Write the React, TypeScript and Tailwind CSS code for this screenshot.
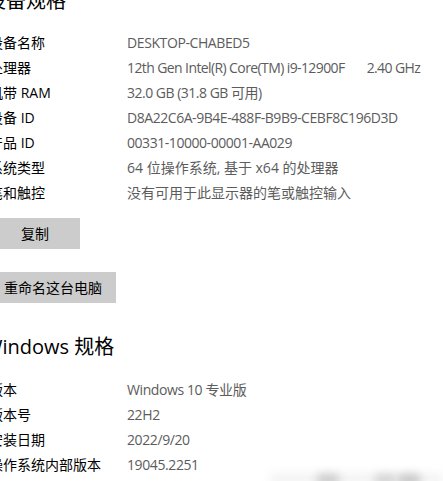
const FONT = "font-['Open_Sans','Noto_Sans_CJK_SC',sans-serif]";

type Spec = { label: string; value: string; tight?: string; extra?: string };

const deviceSpecs: Spec[] = [
  { label: "设备名称", value: "DESKTOP-CHABED5", tight: "tracking-[-0.4px]" },
  { label: "处理器", value: "12th Gen Intel(R) Core(TM) i9-12900F", tight: "tracking-[-0.6px]", extra: "2.40 GHz" },
  { label: "机带 RAM", value: "32.0 GB (31.8 GB 可用)", tight: "tracking-[-0.5px]" },
  { label: "设备 ID", value: "D8A22C6A-9B4E-488F-B9B9-CEBF8C196D3D", tight: "tracking-[-0.45px]" },
  { label: "产品 ID", value: "00331-10000-00001-AA029", tight: "tracking-[-0.45px]" },
  { label: "系统类型", value: "64 位操作系统, 基于 x64 的处理器" },
  { label: "笔和触控", value: "没有可用于此显示器的笔或触控输入" },
];

const windowsSpecs: Spec[] = [
  { label: "版本", value: "Windows 10 专业版", tight: "tracking-[-0.4px]" },
  { label: "版本号", value: "22H2", tight: "tracking-[-0.4px]" },
  { label: "安装日期", value: "2022/9/20", tight: "tracking-[-0.4px]" },
  { label: "操作系统内部版本", value: "19045.2251", tight: "tracking-[-0.4px]" },
];

const SpecRow = ({ spec }: { spec: Spec }) => (
  <div className="flex h-[25px] items-center text-[14px] leading-none">
    <div className="ml-[-1px] w-[138px] shrink-0 text-black">{spec.label}</div>
    <div className={`whitespace-nowrap text-[#5c5c5c] ${spec.tight ?? ""}`}>
      {spec.value}
      {spec.extra && <span className="ml-[22px]">{spec.extra}</span>}
    </div>
  </div>
);

export default function App() {
  return (
    <div className={`relative h-[481px] w-[443px] overflow-hidden bg-white ${FONT}`}>
      <div className="ml-[-10px] mt-[-14px] flex flex-col">
        <h2 className="ml-[-4px] h-[30px] text-[20px] leading-[30px] text-black">设备规格</h2>

        <div className="mt-[14px] flex flex-col">
          {deviceSpecs.map((spec) => (
            <SpecRow key={spec.label} spec={spec} />
          ))}
        </div>

        <button className="mt-[13px] h-[31px] w-[90px] bg-[#cccccc] text-[14px] text-black">复制</button>
        <button className="mt-[23px] h-[31px] w-[126px] bg-[#cccccc] text-[14px] text-black">重命名这台电脑</button>

        <h2 className="ml-[-6px] mt-[29px] h-[30px] text-[20px] leading-[30px] text-black">Windows 规格</h2>

        <div className="mt-[15px] flex flex-col">
          {windowsSpecs.map((spec) => (
            <SpecRow key={spec.label} spec={spec} />
          ))}
        </div>
      </div>

      {/* blurred smudge at bottom right */}
      <div className="absolute bottom-[-6px] left-[270px] h-[14px] w-[173px] bg-[#f4f4f4] blur-[5px]" />
      <div className="absolute bottom-[-5px] left-[316px] h-[12px] w-[24px] rounded-full bg-[#cdcdcd] blur-[4px]" />
      <div className="absolute bottom-[-5px] left-[374px] h-[12px] w-[22px] rounded-full bg-[#d4d4d4] blur-[4px]" />
      <div className="absolute bottom-[-5px] left-[397px] h-[12px] w-[24px] rounded-full bg-[#c8c8c8] blur-[4px]" />
    </div>
  );
}
